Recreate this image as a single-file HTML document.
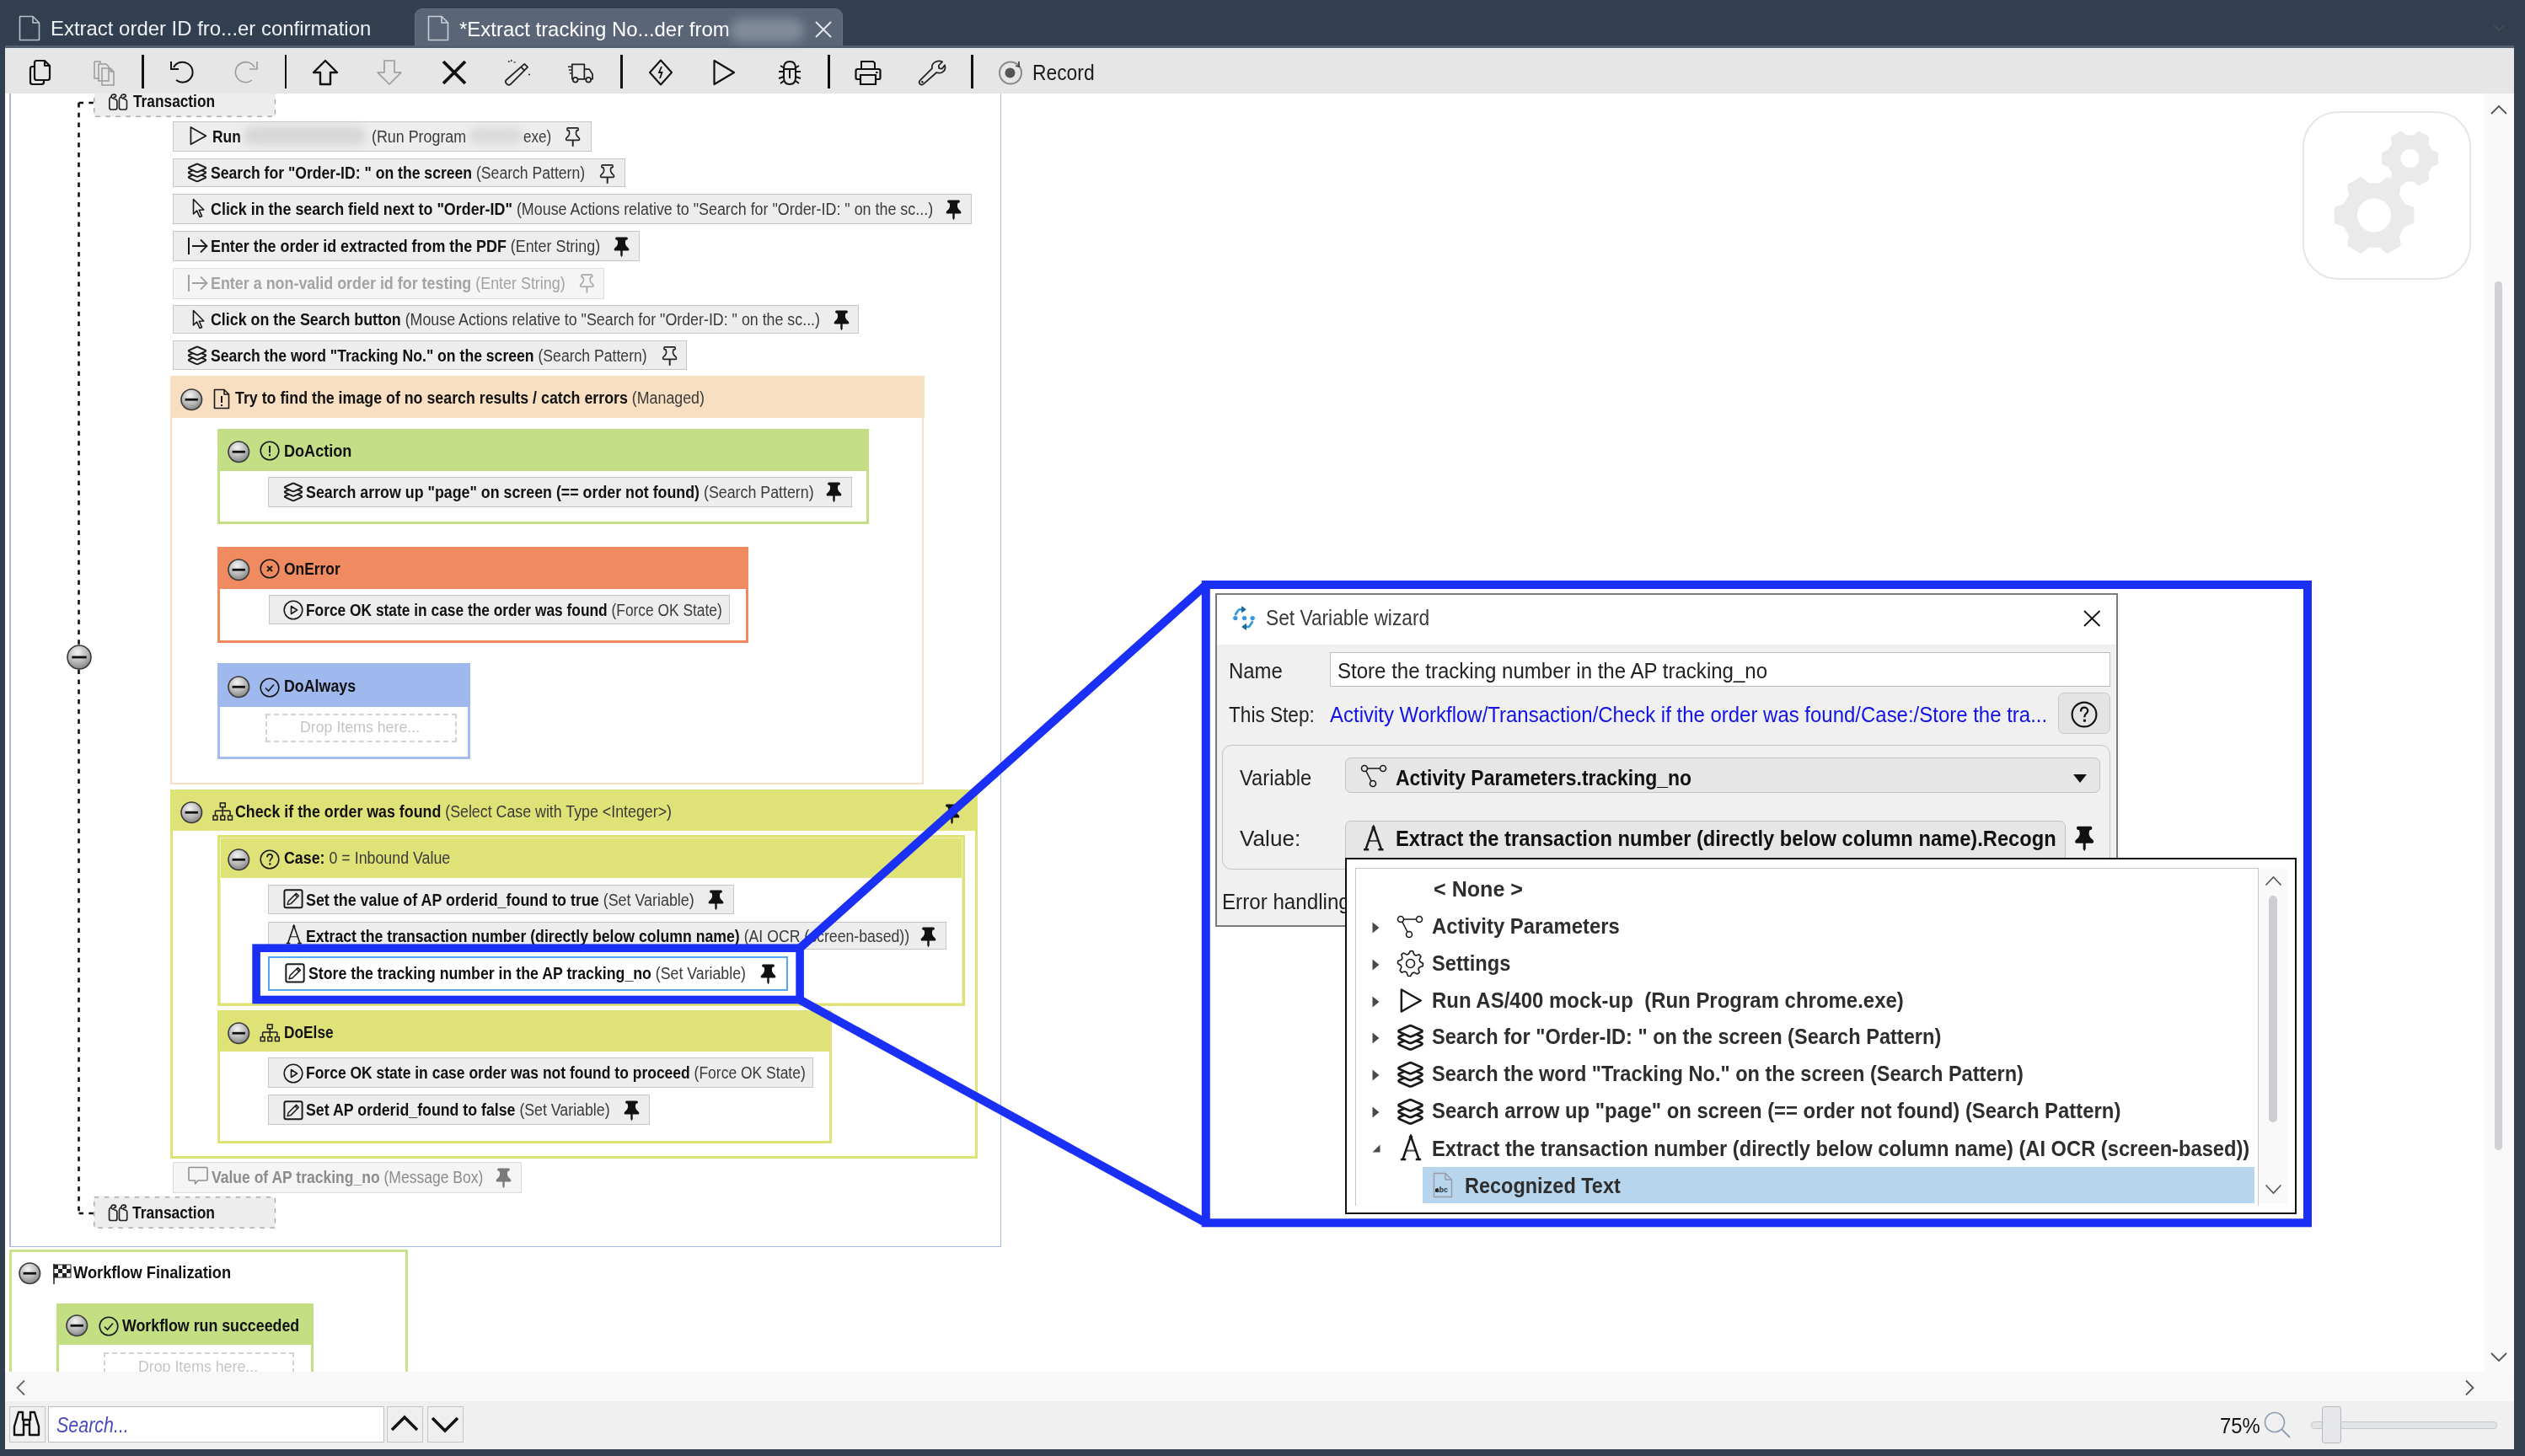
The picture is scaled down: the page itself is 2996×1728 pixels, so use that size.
<!DOCTYPE html><html><head><meta charset="utf-8"><style>
html,body{margin:0;padding:0;width:2996px;height:1728px;overflow:hidden;background:#323f50}
.a{position:absolute;box-sizing:content-box}
.ic{position:absolute;overflow:visible}
.tx{position:absolute;white-space:nowrap;font-family:"Liberation Sans",sans-serif;line-height:1;transform-origin:0 0}
.tx b{font-weight:700}
.tx .r{font-weight:400}
.tx .i{font-style:italic;font-weight:400}
</style></head><body><svg width="0" height="0" style="position:absolute"><defs>
<radialGradient id="gm" cx="0.42" cy="0.3" r="0.75"><stop offset="0" stop-color="#f4f4f4"/><stop offset="0.55" stop-color="#b9b9b9"/><stop offset="1" stop-color="#7d7d7d"/></radialGradient>
</defs></svg>
<div class="a" style="left:0px;top:0px;width:2996px;height:1728px;background:#323f50"></div>
<div class="a" style="left:492px;top:10px;width:506px;height:46px;background:#5a6678;border:1px solid #66727f;border-bottom:none;border-radius:9px 9px 0 0"></div>
<div class="a" style="left:6px;top:53.5px;width:2977px;height:4px;background:#516073"></div>
<div class="a" style="left:6px;top:57px;width:2977px;height:54px;background:#e6e6e6"></div>
<div class="a" style="left:6px;top:111px;width:2941px;height:1517px;background:#ffffff"></div>
<div class="a" style="left:2947px;top:111px;width:36px;height:1517px;background:#f9f9f9"></div>
<div class="a" style="left:6px;top:1628px;width:2977px;height:35px;background:#f8f8f8"></div>
<div class="a" style="left:6px;top:1663px;width:2977px;height:57px;background:#f0f0f0"></div>
<svg class="ic" style="left:22px;top:18px;width:26px;height:31px" viewBox="0 0 26 31" ><path d="M1.5 1.5 H17 L24.5 9 V29.5 H1.5 Z M17 1.5 V9 H24.5" fill="none" stroke="#b9c0ca" stroke-width="1.6" stroke-linejoin="round"/></svg>
<div id="t1" class="tx " style="left:60.02px;top:21.8px;font-size:24.5px;color:#eef1f4;transform:scaleX(0.9766);"><span class="r">Extract order ID fro...er confirmation</span></div>
<svg class="ic" style="left:507px;top:18px;width:26px;height:31px" viewBox="0 0 26 31" ><path d="M1.5 1.5 H17 L24.5 9 V29.5 H1.5 Z M17 1.5 V9 H24.5" fill="none" stroke="#c9cfd8" stroke-width="1.6" stroke-linejoin="round"/></svg>
<div id="t2" class="tx " style="left:545.02px;top:22.6px;font-size:24.5px;color:#ffffff;transform:scaleX(0.9773);"><span class="r">*Extract tracking No...der from</span></div>
<div class="a" style="left:866px;top:22px;width:88px;height:28px;background:#8a94a3;filter:blur(6px);opacity:.8;border-radius:14px"></div>
<svg class="ic" style="left:967px;top:25px;width:20px;height:20px" viewBox="0 0 20 20" ><path d="M1 1 L19 19 M19 1 L1 19" stroke="#e8ebef" stroke-width="1.8"/></svg>
<svg class="ic" style="left:2958px;top:29px;width:14px;height:8px" viewBox="0 0 14 8" ><path d="M1 1 L7 7 L13 1" fill="none" stroke="#4a4f55" stroke-width="1.3"/></svg>
<svg class="ic" style="left:32px;top:69.5px;width:32px;height:32px" viewBox="0 0 32 32" ><path d="M9 4.5 Q9 2 11.5 2 H21 L27 8 V22.5 Q27 25 24.5 25 H11.5 Q9 25 9 22.5 Z M21 2 V8 H27" fill="none" stroke="#111" stroke-width="2.2" stroke-linejoin="round"/><path d="M9 9 H6.5 Q4 9 4 11.5 V27.5 Q4 30 6.5 30 H17.5 Q20 30 20 27.5 V25" fill="none" stroke="#111" stroke-width="2.2"/></svg>
<svg class="ic" style="left:108px;top:69.5px;width:32px;height:32px" viewBox="0 0 32 32" ><path d="M4 3 H11 V5 M4 3 V23 H10" fill="none" stroke="#9a9a9a" stroke-width="1.5"/><path d="M9 6 H18 L21 9 V26 H9 Z" fill="none" stroke="#9a9a9a" stroke-width="1.5"/><path d="M13 11 H23 L27 15 V31 H13 Z M23 11 V15 H27" fill="none" stroke="#9a9a9a" stroke-width="1.5"/></svg>
<div class="a" style="left:168.3px;top:65px;width:2.4px;height:40px;background:#111"></div>
<svg class="ic" style="left:200px;top:69.5px;width:32px;height:32px" viewBox="0 0 32 32" ><path d="M6 10 A12 12 0 1 1 9 25" fill="none" stroke="#111" stroke-width="2"/><path d="M3 3 V12 H12" fill="none" stroke="#111" stroke-width="2"/></svg>
<svg class="ic" style="left:276px;top:69.5px;width:32px;height:32px" viewBox="0 0 32 32" ><path d="M26 10 A12 12 0 1 0 23 25" fill="none" stroke="#9a9a9a" stroke-width="1.6"/><path d="M29 3 V12 H20" fill="none" stroke="#9a9a9a" stroke-width="1.6"/></svg>
<div class="a" style="left:337.8px;top:65px;width:2.4px;height:40px;background:#111"></div>
<svg class="ic" style="left:370px;top:69.5px;width:32px;height:32px" viewBox="0 0 32 32" ><path d="M16 2 L30 16 H22 V30 H10 V16 H2 Z" fill="none" stroke="#111" stroke-width="2.4" stroke-linejoin="round"/></svg>
<svg class="ic" style="left:446px;top:69.5px;width:32px;height:32px" viewBox="0 0 32 32" ><path d="M16 30 L30 16 H22 V2 H10 V16 H2 Z" fill="none" stroke="#9a9a9a" stroke-width="1.6" stroke-linejoin="round"/></svg>
<svg class="ic" style="left:523px;top:69.5px;width:32px;height:32px" viewBox="0 0 32 32" ><path d="M3 3 L29 29 M29 3 L3 29" stroke="#111" stroke-width="3.8"/></svg>
<svg class="ic" style="left:598px;top:69.5px;width:32px;height:32px" viewBox="0 0 33 33" ><path d="M25 6 L29 10 L8 31 Q6 32.5 4 31 L2.5 29.5 Q1 27.5 3 25.5 Z M21 10 L25 14" fill="none" stroke="#222" stroke-width="1.8" stroke-linejoin="round"/><path d="M5 3 h2 M9 1 v2 M12 4 h2 M30 19 h2" stroke="#222" stroke-width="1.5"/></svg>
<svg class="ic" style="left:673px;top:69.5px;width:32px;height:32px" viewBox="0 0 33 32" ><path d="M6 6 H21 V24 H6 Z M21 12 H27 L31 18 V24 H21" fill="none" stroke="#222" stroke-width="1.8" stroke-linejoin="round"/><circle cx="10" cy="25" r="3" fill="#e6e6e6" stroke="#222" stroke-width="1.8"/><circle cx="26" cy="25" r="3" fill="#e6e6e6" stroke="#222" stroke-width="1.8"/><path d="M1 9 H5 M2 13 H5 M3 17 H5" stroke="#222" stroke-width="1.5"/></svg>
<div class="a" style="left:736.3px;top:65px;width:2.4px;height:40px;background:#111"></div>
<svg class="ic" style="left:770px;top:69.5px;width:28px;height:32px" viewBox="0 0 28 32" ><path d="M14 1.5 L27 16 L14 30.5 L1 16 Z" fill="none" stroke="#111" stroke-width="2" stroke-linejoin="round"/><path d="M15 9 L12 16 H15.5 L13 23" fill="none" stroke="#111" stroke-width="1.8"/></svg>
<svg class="ic" style="left:845px;top:69.5px;width:28px;height:32px" viewBox="0 0 28 32" ><path d="M2.5 2 L26 16 L2.5 30 Z" fill="none" stroke="#111" stroke-width="2.2" stroke-linejoin="round"/></svg>
<svg class="ic" style="left:921px;top:69.5px;width:32px;height:32px" viewBox="0 0 32 32" ><path d="M9 11 Q9 3 16 3 Q23 3 23 11 V22 Q23 30 16 30 Q9 30 9 22 Z" fill="none" stroke="#111" stroke-width="2"/><path d="M9 12 H23 M16 12 V23 M3 15 H9 M23 15 H29 M3 23 L9 21 M29 23 L23 21 M5 8 L10 11 M27 8 L22 11 M5 29 L9 26 M27 29 L23 26" stroke="#111" stroke-width="2"/></svg>
<div class="a" style="left:982.3px;top:65px;width:2.4px;height:40px;background:#111"></div>
<svg class="ic" style="left:1014px;top:69.5px;width:32px;height:32px" viewBox="0 0 32 32" ><path d="M8 12 V3 H22 L24 5 V12" fill="none" stroke="#111" stroke-width="2"/><path d="M7 24 H3 Q1.5 24 1.5 22 V14 Q1.5 12 3.5 12 H28.5 Q30.5 12 30.5 14 V22 Q30.5 24 29 24 H25" fill="none" stroke="#111" stroke-width="2.2"/><path d="M7 19 H25 V30 H7 Z" fill="none" stroke="#111" stroke-width="2.2"/><rect x="25" y="15" width="2.5" height="2" fill="#111"/></svg>
<svg class="ic" style="left:1090px;top:69.5px;width:32px;height:32px" viewBox="0 0 33 32" ><path d="M19 4 Q24 0.5 29 3 L24.5 7.5 L25 11 L28.5 11.5 L32 7 Q34 13 28.5 16 Q25 17.5 22 16 L6 30 Q3.5 32 1.5 30 Q-0.5 28 2 25.5 L16.5 11 Q15.5 7 19 4 Z" fill="none" stroke="#222" stroke-width="1.8" stroke-linejoin="round"/><circle cx="4.5" cy="27.5" r="1.3" fill="#222"/></svg>
<div class="a" style="left:1152.3px;top:65px;width:2.4px;height:40px;background:#111"></div>
<svg class="ic" style="left:1184px;top:69.5px;width:30px;height:32px" viewBox="0 0 30 32" ><circle cx="15" cy="16.5" r="13" fill="none" stroke="#8a8a8a" stroke-width="2"/><circle cx="14.5" cy="16.5" r="6" fill="#555"/><path d="M25 3 V9 L21 8" fill="none" stroke="#444" stroke-width="1.8"/></svg>
<div id="t3" class="tx " style="left:1224.58px;top:73.5px;font-size:25.5px;color:#1a1a1a;transform:scaleX(0.8954);"><span class="r">Record</span></div>
<div class="a" style="left:2732px;top:132px;width:196px;height:196px;border:2px solid #e6e6e6;border-radius:42px"></div>
<svg class="ic" style="left:2732px;top:132px;width:200px;height:200px" viewBox="0 0 200 200" ><polygon points="119.2,112.4 129.4,116.0 129.4,131.0 119.2,134.6 111.8,147.6 113.7,158.2 100.7,165.7 92.5,158.7 77.5,158.7 69.3,165.7 56.3,158.2 58.2,147.6 50.8,134.6 40.6,131.0 40.6,116.0 50.8,112.4 58.2,99.4 56.3,88.8 69.3,81.3 77.5,88.3 92.5,88.3 100.7,81.3 113.7,88.8 111.8,99.4" fill="#eaeaea" stroke="#eaeaea" stroke-width="6" stroke-linejoin="round"/><circle cx="85" cy="123.5" r="20" fill="#fff"/><polygon points="151.3,48.3 158.1,50.8 158.1,61.2 151.3,63.7 146.1,72.7 147.3,79.9 138.3,85.1 132.7,80.5 122.3,80.5 116.7,85.1 107.7,79.9 108.9,72.7 103.7,63.7 96.9,61.2 96.9,50.8 103.7,48.3 108.9,39.3 107.7,32.1 116.7,26.9 122.3,31.5 132.7,31.5 138.3,26.9 147.3,32.1 146.1,39.3" fill="#eaeaea" stroke="#eaeaea" stroke-width="6" stroke-linejoin="round"/><circle cx="127.5" cy="56" r="11" fill="#fff"/></svg>
<div style="position:absolute;left:0;top:0;width:2996px;height:1728px;clip-path:inset(111px 49px 100px 6px)">
<div class="a" style="left:11px;top:111px;width:1.6px;height:1369px;background:#a9b7e4"></div>
<div class="a" style="left:1186.5px;top:111px;width:1.6px;height:1369px;background:#a9b7e4"></div>
<div class="a" style="left:11px;top:1478.6px;width:1177px;height:1.6px;background:#a9b7e4"></div>
<svg class="ic" style="left:80px;top:115px;width:40px;height:1335px" viewBox="0 0 40 1335" ><path d="M13.5 7 V1325 M13.5 7 H31 M13.5 1325 H31" fill="none" stroke="#111" stroke-width="2.6" stroke-dasharray="5.5 6.3"/></svg>
<svg class="ic" style="left:78.5px;top:764.5px;width:30px;height:30px" viewBox="0 0 30 30" ><circle cx="15.0" cy="15.0" r="14.0" fill="url(#gm)" stroke="#3a3a3a" stroke-width="1.6"/><rect x="6.3" y="13.6" width="17.4" height="2.8" fill="#111"/></svg>
<svg class="ic" style="left:110.9px;top:104px;width:216.2px;height:35px" viewBox="0 0 216.2 35"><rect x="0.7" y="0.7" width="214.79999999999998" height="33.6" fill="#ededed" stroke="#aaaaaa" stroke-width="1.4" stroke-dasharray="5.5 6.5"/></svg>
<svg class="ic" style="left:128.3px;top:111px;width:24px;height:20px" viewBox="0 0 24 21" ><path d="M1.3 7.5 V17.6 Q1.3 20 3.7 20 H8.4 Q10.8 20 10.8 17.6 V9.6 Q10.8 8.2 9.6 7.7 L4.8 5.6 Q3.4 4.8 3.8 3 Q4.5 0.9 7.2 1.2 Q9.6 1.5 9.5 3.3 Q9.3 4.8 7 4.5 M1.3 7.5 Q1.3 5.3 3.3 4" fill="none" stroke="#222" stroke-width="1.7" stroke-linejoin="round" stroke-linecap="round"/><path d="M1.3 7.5 V17.6 Q1.3 20 3.7 20 H8.4 Q10.8 20 10.8 17.6 V9.6 Q10.8 8.2 9.6 7.7 L4.8 5.6 Q3.4 4.8 3.8 3 Q4.5 0.9 7.2 1.2 Q9.6 1.5 9.5 3.3 Q9.3 4.8 7 4.5 M1.3 7.5 Q1.3 5.3 3.3 4" transform="translate(12.2,0)" fill="none" stroke="#222" stroke-width="1.7" stroke-linejoin="round" stroke-linecap="round"/></svg>
<div id="t4" class="tx " style="left:157.82px;top:111.2px;font-size:19.5px;color:#111;transform:scaleX(0.8866);"><b>Transaction</b></div>
<svg class="ic" style="left:110.9px;top:1419.6px;width:216.2px;height:38.0px" viewBox="0 0 216.2 38.0"><rect x="0.7" y="0.7" width="214.79999999999998" height="36.6" fill="#ededed" stroke="#aaaaaa" stroke-width="1.4" stroke-dasharray="5.5 6.5"/></svg>
<svg class="ic" style="left:128.3px;top:1429.4px;width:24px;height:20.5px" viewBox="0 0 24 21" ><path d="M1.3 7.5 V17.6 Q1.3 20 3.7 20 H8.4 Q10.8 20 10.8 17.6 V9.6 Q10.8 8.2 9.6 7.7 L4.8 5.6 Q3.4 4.8 3.8 3 Q4.5 0.9 7.2 1.2 Q9.6 1.5 9.5 3.3 Q9.3 4.8 7 4.5 M1.3 7.5 Q1.3 5.3 3.3 4" fill="none" stroke="#222" stroke-width="1.7" stroke-linejoin="round" stroke-linecap="round"/><path d="M1.3 7.5 V17.6 Q1.3 20 3.7 20 H8.4 Q10.8 20 10.8 17.6 V9.6 Q10.8 8.2 9.6 7.7 L4.8 5.6 Q3.4 4.8 3.8 3 Q4.5 0.9 7.2 1.2 Q9.6 1.5 9.5 3.3 Q9.3 4.8 7 4.5 M1.3 7.5 Q1.3 5.3 3.3 4" transform="translate(12.2,0)" fill="none" stroke="#222" stroke-width="1.7" stroke-linejoin="round" stroke-linecap="round"/></svg>
<div id="t5" class="tx " style="left:156.82px;top:1430.0px;font-size:19.5px;color:#111;transform:scaleX(0.8958);"><b>Transaction</b></div>
<div class="a" style="left:204.5px;top:143.8px;width:495.0px;height:34.5px;background:#ededed;border:1.5px solid #c6c6c6"></div>
<svg class="ic" style="left:224.3px;top:149.2px;width:22.3px;height:24.3px" viewBox="0 0 22 25" ><path d="M2 2 L20.5 12.5 L2 23 Z" fill="none" stroke="#1a1a1a" stroke-width="1.8" stroke-linejoin="round"/></svg>
<div id="t6" class="tx " style="left:251.52px;top:153.2px;font-size:19.5px;color:#111;transform:scaleX(0.8929);"><b>Run</b></div>
<div class="a" style="left:289px;top:150px;width:145px;height:22px;background:#d2d2d2;filter:blur(5px);border-radius:10px;opacity:.8"></div>
<div id="t7" class="tx " style="left:441.22px;top:153.2px;font-size:19.5px;color:#111;transform:scaleX(0.9157);"><span class="r" style="color:#3a3a3a">(Run Program</span></div>
<div class="a" style="left:557px;top:151px;width:63px;height:20px;background:#d6d6d6;filter:blur(5px);border-radius:9px;opacity:.8"></div>
<div id="t8" class="tx " style="left:621.22px;top:153.2px;font-size:19.5px;color:#111;transform:scaleX(0.8737);"><span class="r" style="color:#3a3a3a">exe)</span></div>
<svg class="ic" style="left:668.5px;top:148.5px;width:19.5px;height:25px" viewBox="0 0 19.5 25" ><g transform="translate(2,1.6) scale(0.9)"><path d="M3.2 1.4 H15.6 Q16.9 1.4 16.9 3.1 Q16.9 4.8 15.6 4.8 H14.6 Q13.6 7 14 9.5 Q14.4 11.8 17.4 14.2 Q18.4 15.1 18.4 16.2 Q18.4 17.5 17 17.5 H2 Q0.6 17.5 0.6 16.2 Q0.6 15.1 1.6 14.2 Q4.6 11.8 5 9.5 Q5.4 7 4.4 4.8 H3.3 Q2.1 4.8 2.1 3.1 Q2.1 1.4 3.2 1.4 Z" fill="none" stroke="#222" stroke-width="1.8" stroke-linejoin="round"/><path d="M8.5 17.5 H10.5 V26" fill="#222" stroke="#222" stroke-width="0"/><rect x="8.6" y="17.5" width="1.9" height="8.3" fill="#222"/></g></svg>
<div class="a" style="left:204.5px;top:187.7px;width:535.0px;height:32.20000000000002px;background:#ededed;border:1.5px solid #c6c6c6"></div>
<svg class="ic" style="left:222px;top:193.4px;width:24px;height:24px" viewBox="0 0 24 24" ><path d="M12 12.6 Q12.6 12.6 13.4 13 L21.6 16.6 Q22.8 17.3 21.6 18.1 L13.4 21.8 Q12 22.5 10.6 21.8 L2.4 18.1 Q1.2 17.3 2.4 16.6 L10.6 13 Q11.4 12.6 12 12.6 Z" fill="#ededed" stroke="#1a1a1a" stroke-width="2" stroke-linejoin="round"/><path d="M12 7.1 Q12.6 7.1 13.4 7.5 L21.6 11.1 Q22.8 11.8 21.6 12.6 L13.4 16.3 Q12 17.0 10.6 16.3 L2.4 12.6 Q1.2 11.8 2.4 11.1 L10.6 7.5 Q11.4 7.1 12 7.1 Z" fill="#ededed" stroke="#1a1a1a" stroke-width="2" stroke-linejoin="round"/><path d="M12 1.6 Q12.6 1.6 13.4 2 L21.6 5.6 Q22.8 6.3 21.6 7.1 L13.4 10.8 Q12 11.5 10.6 10.8 L2.4 7.1 Q1.2 6.3 2.4 5.6 L10.6 2 Q11.4 1.6 12 1.6 Z" fill="#ededed" stroke="#1a1a1a" stroke-width="2" stroke-linejoin="round"/></svg>
<div id="t9" class="tx " style="left:250.22px;top:195.9px;font-size:19.5px;color:#111;transform:scaleX(0.9026);"><b>Search for "Order-ID: " on the screen </b><span class="r" style="color:#3a3a3a">(Search Pattern)</span></div>
<svg class="ic" style="left:710px;top:192.5px;width:19.5px;height:25px" viewBox="0 0 19.5 25" ><g transform="translate(2,1.6) scale(0.9)"><path d="M3.2 1.4 H15.6 Q16.9 1.4 16.9 3.1 Q16.9 4.8 15.6 4.8 H14.6 Q13.6 7 14 9.5 Q14.4 11.8 17.4 14.2 Q18.4 15.1 18.4 16.2 Q18.4 17.5 17 17.5 H2 Q0.6 17.5 0.6 16.2 Q0.6 15.1 1.6 14.2 Q4.6 11.8 5 9.5 Q5.4 7 4.4 4.8 H3.3 Q2.1 4.8 2.1 3.1 Q2.1 1.4 3.2 1.4 Z" fill="none" stroke="#222" stroke-width="1.8" stroke-linejoin="round"/><path d="M8.5 17.5 H10.5 V26" fill="#222" stroke="#222" stroke-width="0"/><rect x="8.6" y="17.5" width="1.9" height="8.3" fill="#222"/></g></svg>
<div class="a" style="left:204.5px;top:229.7px;width:946.7px;height:34.400000000000034px;background:#ededed;border:1.5px solid #c6c6c6"></div>
<svg class="ic" style="left:228px;top:235.3px;width:15px;height:24px" viewBox="0 0 15 24" ><path d="M1.5 1.5 L1.5 19 L5.5 15 L9 22.5 L11.5 21.5 L8.3 14.3 L13.8 14 Z" fill="none" stroke="#1a1a1a" stroke-width="1.6" stroke-linejoin="round"/></svg>
<div id="t10" class="tx " style="left:250.22px;top:239.0px;font-size:19.5px;color:#111;transform:scaleX(0.9173);"><b>Click in the search field next to "Order-ID" </b><span class="r" style="color:#3a3a3a">(Mouse Actions relative to "Search for "Order-ID: " on the sc...)</span></div>
<svg class="ic" style="left:1121.6px;top:236px;width:19.5px;height:25px" viewBox="0 0 19.5 25" ><path d="M3.2 1.4 H15.6 Q16.9 1.4 16.9 3.1 Q16.9 4.8 15.6 4.8 H14.6 Q13.6 7 14 9.5 Q14.4 11.8 17.4 14.2 Q18.4 15.1 18.4 16.2 Q18.4 17.5 17 17.5 H2 Q0.6 17.5 0.6 16.2 Q0.6 15.1 1.6 14.2 Q4.6 11.8 5 9.5 Q5.4 7 4.4 4.8 H3.3 Q2.1 4.8 2.1 3.1 Q2.1 1.4 3.2 1.4 Z" fill="#111"/><path d="M8.3 17 H10.7 V23 L9.5 25.3 L8.3 23 Z" fill="#111"/></svg>
<div class="a" style="left:204.5px;top:273.9px;width:552.7px;height:33.700000000000045px;background:#ededed;border:1.5px solid #c6c6c6"></div>
<svg class="ic" style="left:222px;top:280px;width:26px;height:24px" viewBox="0 0 26 24" ><rect x="1" y="2" width="2" height="20" fill="#1a1a1a"/><path d="M6 12 H23 M16 4.5 L23.5 12 L16 19.5" fill="none" stroke="#1a1a1a" stroke-width="1.8"/></svg>
<div id="t11" class="tx " style="left:250.22px;top:282.9px;font-size:19.5px;color:#111;transform:scaleX(0.9172);"><b>Enter the order id extracted from the PDF </b><span class="r" style="color:#3a3a3a">(Enter String)</span></div>
<svg class="ic" style="left:728px;top:280px;width:19.5px;height:25px" viewBox="0 0 19.5 25" ><path d="M3.2 1.4 H15.6 Q16.9 1.4 16.9 3.1 Q16.9 4.8 15.6 4.8 H14.6 Q13.6 7 14 9.5 Q14.4 11.8 17.4 14.2 Q18.4 15.1 18.4 16.2 Q18.4 17.5 17 17.5 H2 Q0.6 17.5 0.6 16.2 Q0.6 15.1 1.6 14.2 Q4.6 11.8 5 9.5 Q5.4 7 4.4 4.8 H3.3 Q2.1 4.8 2.1 3.1 Q2.1 1.4 3.2 1.4 Z" fill="#111"/><path d="M8.3 17 H10.7 V23 L9.5 25.3 L8.3 23 Z" fill="#111"/></svg>
<div class="a" style="left:204.5px;top:317.8px;width:510.5px;height:35.19999999999999px;background:#f5f5f5;border:1px solid #dedede"></div>
<svg class="ic" style="left:222px;top:324px;width:26px;height:24px" viewBox="0 0 26 24" ><rect x="1" y="2" width="2" height="20" fill="#a0a0a0"/><path d="M6 12 H23 M16 4.5 L23.5 12 L16 19.5" fill="none" stroke="#a0a0a0" stroke-width="1.8"/></svg>
<div id="t12" class="tx " style="left:250.22px;top:327.0px;font-size:19.5px;color:#a3a3a3;transform:scaleX(0.9178);"><b>Enter a non-valid order id for testing </b><span class="r">(Enter String)</span></div>
<svg class="ic" style="left:686px;top:323px;width:19px;height:25px" viewBox="0 0 19.5 25" ><g transform="translate(2,1.6) scale(0.9)"><path d="M3.2 1.4 H15.6 Q16.9 1.4 16.9 3.1 Q16.9 4.8 15.6 4.8 H14.6 Q13.6 7 14 9.5 Q14.4 11.8 17.4 14.2 Q18.4 15.1 18.4 16.2 Q18.4 17.5 17 17.5 H2 Q0.6 17.5 0.6 16.2 Q0.6 15.1 1.6 14.2 Q4.6 11.8 5 9.5 Q5.4 7 4.4 4.8 H3.3 Q2.1 4.8 2.1 3.1 Q2.1 1.4 3.2 1.4 Z" fill="none" stroke="#a8a8a8" stroke-width="1.8" stroke-linejoin="round"/><path d="M8.5 17.5 H10.5 V26" fill="#a8a8a8" stroke="#a8a8a8" stroke-width="0"/><rect x="8.6" y="17.5" width="1.9" height="8.3" fill="#a8a8a8"/></g></svg>
<div class="a" style="left:204.5px;top:361.7px;width:812.4px;height:32.0px;background:#ededed;border:1.5px solid #c6c6c6"></div>
<svg class="ic" style="left:228px;top:367px;width:15px;height:24px" viewBox="0 0 15 24" ><path d="M1.5 1.5 L1.5 19 L5.5 15 L9 22.5 L11.5 21.5 L8.3 14.3 L13.8 14 Z" fill="none" stroke="#1a1a1a" stroke-width="1.6" stroke-linejoin="round"/></svg>
<div id="t13" class="tx " style="left:250.22px;top:369.8px;font-size:19.5px;color:#111;transform:scaleX(0.9137);"><b>Click on the Search button </b><span class="r" style="color:#3a3a3a">(Mouse Actions relative to "Search for "Order-ID: " on the sc...)</span></div>
<svg class="ic" style="left:989px;top:366.5px;width:19.5px;height:25px" viewBox="0 0 19.5 25" ><path d="M3.2 1.4 H15.6 Q16.9 1.4 16.9 3.1 Q16.9 4.8 15.6 4.8 H14.6 Q13.6 7 14 9.5 Q14.4 11.8 17.4 14.2 Q18.4 15.1 18.4 16.2 Q18.4 17.5 17 17.5 H2 Q0.6 17.5 0.6 16.2 Q0.6 15.1 1.6 14.2 Q4.6 11.8 5 9.5 Q5.4 7 4.4 4.8 H3.3 Q2.1 4.8 2.1 3.1 Q2.1 1.4 3.2 1.4 Z" fill="#111"/><path d="M8.3 17 H10.7 V23 L9.5 25.3 L8.3 23 Z" fill="#111"/></svg>
<div class="a" style="left:204.5px;top:403.7px;width:608.5px;height:33.60000000000002px;background:#ededed;border:1.5px solid #c6c6c6"></div>
<svg class="ic" style="left:222px;top:409.5px;width:24px;height:24px" viewBox="0 0 24 24" ><path d="M12 12.6 Q12.6 12.6 13.4 13 L21.6 16.6 Q22.8 17.3 21.6 18.1 L13.4 21.8 Q12 22.5 10.6 21.8 L2.4 18.1 Q1.2 17.3 2.4 16.6 L10.6 13 Q11.4 12.6 12 12.6 Z" fill="#ededed" stroke="#1a1a1a" stroke-width="2" stroke-linejoin="round"/><path d="M12 7.1 Q12.6 7.1 13.4 7.5 L21.6 11.1 Q22.8 11.8 21.6 12.6 L13.4 16.3 Q12 17.0 10.6 16.3 L2.4 12.6 Q1.2 11.8 2.4 11.1 L10.6 7.5 Q11.4 7.1 12 7.1 Z" fill="#ededed" stroke="#1a1a1a" stroke-width="2" stroke-linejoin="round"/><path d="M12 1.6 Q12.6 1.6 13.4 2 L21.6 5.6 Q22.8 6.3 21.6 7.1 L13.4 10.8 Q12 11.5 10.6 10.8 L2.4 7.1 Q1.2 6.3 2.4 5.6 L10.6 2 Q11.4 1.6 12 1.6 Z" fill="#ededed" stroke="#1a1a1a" stroke-width="2" stroke-linejoin="round"/></svg>
<div id="t14" class="tx " style="left:250.22px;top:412.6px;font-size:19.5px;color:#111;transform:scaleX(0.9029);"><b>Search the word "Tracking No." on the screen </b><span class="r" style="color:#3a3a3a">(Search Pattern)</span></div>
<svg class="ic" style="left:784px;top:409px;width:19.5px;height:25px" viewBox="0 0 19.5 25" ><g transform="translate(2,1.6) scale(0.9)"><path d="M3.2 1.4 H15.6 Q16.9 1.4 16.9 3.1 Q16.9 4.8 15.6 4.8 H14.6 Q13.6 7 14 9.5 Q14.4 11.8 17.4 14.2 Q18.4 15.1 18.4 16.2 Q18.4 17.5 17 17.5 H2 Q0.6 17.5 0.6 16.2 Q0.6 15.1 1.6 14.2 Q4.6 11.8 5 9.5 Q5.4 7 4.4 4.8 H3.3 Q2.1 4.8 2.1 3.1 Q2.1 1.4 3.2 1.4 Z" fill="none" stroke="#222" stroke-width="1.8" stroke-linejoin="round"/><path d="M8.5 17.5 H10.5 V26" fill="#222" stroke="#222" stroke-width="0"/><rect x="8.6" y="17.5" width="1.9" height="8.3" fill="#222"/></g></svg>
<div class="a" style="left:202.3px;top:445.8px;width:890.0px;height:481.7px;border:2.5px solid #fcdcc1;background:#fff"></div>
<div class="a" style="left:202.3px;top:445.8px;width:895.0px;height:50.5px;background:#f9dfc2"></div>
<svg class="ic" style="left:214.05px;top:460.95px;width:26.5px;height:26.5px" viewBox="0 0 26.5 26.5" ><circle cx="13.25" cy="13.25" r="12.25" fill="url(#gm)" stroke="#3a3a3a" stroke-width="1.6"/><rect x="5.5649999999999995" y="11.85" width="15.37" height="2.8" fill="#111"/></svg>
<svg class="ic" style="left:253px;top:460.7px;width:20px;height:25px" viewBox="0 0 20 25" ><path d="M1.5 1.5 H13 L18.5 7 V23.5 H1.5 Z M13 1.5 V7 H18.5" fill="none" stroke="#1a1a1a" stroke-width="1.6" stroke-linejoin="round"/><rect x="9" y="9" width="2" height="8" fill="#1a1a1a"/><rect x="9" y="19" width="2" height="2" fill="#1a1a1a"/></svg>
<div id="t15" class="tx " style="left:279.22px;top:463.3px;font-size:19.5px;color:#111;transform:scaleX(0.9128);"><b>Try to find the image of no search results / catch errors </b><span class="r" style="color:#3a3a3a">(Managed)</span></div>
<div class="a" style="left:258.3px;top:509.2px;width:767.1000000000001px;height:107.30000000000001px;border:3px solid #c3de85;background:#fff"></div>
<div class="a" style="left:258.3px;top:509.2px;width:773.1000000000001px;height:49.80000000000001px;background:#c3de85"></div>
<svg class="ic" style="left:269.95px;top:522.75px;width:26.5px;height:26.5px" viewBox="0 0 26.5 26.5" ><circle cx="13.25" cy="13.25" r="12.25" fill="url(#gm)" stroke="#3a3a3a" stroke-width="1.6"/><rect x="5.5649999999999995" y="11.85" width="15.37" height="2.8" fill="#111"/></svg>
<svg class="ic" style="left:308px;top:523px;width:24px;height:24px" viewBox="0 0 24 24" ><circle cx="12" cy="12" r="10.8" fill="none" stroke="#1a1a1a" stroke-width="1.6"/><rect x="11" y="6" width="2" height="8.5" fill="#1a1a1a"/><rect x="11" y="16" width="2" height="2.2" fill="#1a1a1a"/></svg>
<div id="t16" class="tx " style="left:336.72px;top:526.3px;font-size:19.5px;color:#111;transform:scaleX(0.9272);"><b>DoAction</b></div>
<div class="a" style="left:318.3px;top:565.5px;width:691.2px;height:34.10000000000002px;background:#ededed;border:1.5px solid #c6c6c6"></div>
<svg class="ic" style="left:336px;top:571.5px;width:24px;height:24px" viewBox="0 0 24 24" ><path d="M12 12.6 Q12.6 12.6 13.4 13 L21.6 16.6 Q22.8 17.3 21.6 18.1 L13.4 21.8 Q12 22.5 10.6 21.8 L2.4 18.1 Q1.2 17.3 2.4 16.6 L10.6 13 Q11.4 12.6 12 12.6 Z" fill="#ededed" stroke="#1a1a1a" stroke-width="2" stroke-linejoin="round"/><path d="M12 7.1 Q12.6 7.1 13.4 7.5 L21.6 11.1 Q22.8 11.8 21.6 12.6 L13.4 16.3 Q12 17.0 10.6 16.3 L2.4 12.6 Q1.2 11.8 2.4 11.1 L10.6 7.5 Q11.4 7.1 12 7.1 Z" fill="#ededed" stroke="#1a1a1a" stroke-width="2" stroke-linejoin="round"/><path d="M12 1.6 Q12.6 1.6 13.4 2 L21.6 5.6 Q22.8 6.3 21.6 7.1 L13.4 10.8 Q12 11.5 10.6 10.8 L2.4 7.1 Q1.2 6.3 2.4 5.6 L10.6 2 Q11.4 1.6 12 1.6 Z" fill="#ededed" stroke="#1a1a1a" stroke-width="2" stroke-linejoin="round"/></svg>
<div id="t17" class="tx " style="left:363.22px;top:574.7px;font-size:19.5px;color:#111;transform:scaleX(0.9131);"><b>Search arrow up "page" on screen (== order not found) </b><span class="r" style="color:#3a3a3a">(Search Pattern)</span></div>
<svg class="ic" style="left:980px;top:571px;width:19.5px;height:25px" viewBox="0 0 19.5 25" ><path d="M3.2 1.4 H15.6 Q16.9 1.4 16.9 3.1 Q16.9 4.8 15.6 4.8 H14.6 Q13.6 7 14 9.5 Q14.4 11.8 17.4 14.2 Q18.4 15.1 18.4 16.2 Q18.4 17.5 17 17.5 H2 Q0.6 17.5 0.6 16.2 Q0.6 15.1 1.6 14.2 Q4.6 11.8 5 9.5 Q5.4 7 4.4 4.8 H3.3 Q2.1 4.8 2.1 3.1 Q2.1 1.4 3.2 1.4 Z" fill="#111"/><path d="M8.3 17 H10.7 V23 L9.5 25.3 L8.3 23 Z" fill="#111"/></svg>
<div class="a" style="left:258.4px;top:649.3px;width:623.5px;height:107.30000000000007px;border:3px solid #f08a5c;background:#fff"></div>
<div class="a" style="left:258.4px;top:649.3px;width:629.5px;height:49.40000000000009px;background:#f08b61"></div>
<svg class="ic" style="left:269.95px;top:662.75px;width:26.5px;height:26.5px" viewBox="0 0 26.5 26.5" ><circle cx="13.25" cy="13.25" r="12.25" fill="url(#gm)" stroke="#3a3a3a" stroke-width="1.6"/><rect x="5.5649999999999995" y="11.85" width="15.37" height="2.8" fill="#111"/></svg>
<svg class="ic" style="left:308px;top:663px;width:24px;height:24px" viewBox="0 0 24 24" ><circle cx="12" cy="12" r="10.8" fill="none" stroke="#1a1a1a" stroke-width="1.6"/><path d="M9 9 L15 15 M15 9 L9 15" stroke="#1a1a1a" stroke-width="1.8"/></svg>
<div id="t18" class="tx " style="left:336.72px;top:666.2px;font-size:19.5px;color:#111;transform:scaleX(0.8914);"><b>OnError</b></div>
<div class="a" style="left:318.5px;top:705.5px;width:545.0px;height:33.89999999999998px;background:#ededed;border:1.5px solid #c6c6c6"></div>
<svg class="ic" style="left:336px;top:711.5px;width:24px;height:24px" viewBox="0 0 24 24" ><circle cx="12" cy="12" r="10.8" fill="none" stroke="#1a1a1a" stroke-width="1.6"/><path d="M9.5 7.5 L16.5 12 L9.5 16.5 Z" fill="none" stroke="#1a1a1a" stroke-width="1.6" stroke-linejoin="round"/></svg>
<div id="t19" class="tx " style="left:363.22px;top:714.6px;font-size:19.5px;color:#111;transform:scaleX(0.8898);"><b>Force OK state in case the order was found </b><span class="r" style="color:#3a3a3a">(Force OK State)</span></div>
<div class="a" style="left:258.4px;top:787.3px;width:293.80000000000007px;height:107.30000000000007px;border:3px solid #a3bcef;background:#fff"></div>
<div class="a" style="left:258.4px;top:787.3px;width:299.80000000000007px;height:51.5px;background:#9fb8ee"></div>
<svg class="ic" style="left:269.95px;top:802.35px;width:26.5px;height:26.5px" viewBox="0 0 26.5 26.5" ><circle cx="13.25" cy="13.25" r="12.25" fill="url(#gm)" stroke="#3a3a3a" stroke-width="1.6"/><rect x="5.5649999999999995" y="11.85" width="15.37" height="2.8" fill="#111"/></svg>
<svg class="ic" style="left:308px;top:803.5px;width:24px;height:24px" viewBox="0 0 24 24" ><circle cx="12" cy="12" r="10.8" fill="none" stroke="#1a1a1a" stroke-width="1.6"/><path d="M7 12.5 L10.5 16 L17 8.5" fill="none" stroke="#1a1a1a" stroke-width="1.6"/></svg>
<div id="t20" class="tx " style="left:336.72px;top:805.3px;font-size:19.5px;color:#111;transform:scaleX(0.9135);"><b>DoAlways</b></div>
<div class="a" style="left:314.8px;top:847px;width:223px;height:30px;border:2px dashed #d2d2d2"></div>
<div id="t21" class="tx " style="left:356.24px;top:853.4px;font-size:19px;color:#c4c4c4;transform:scaleX(0.9344);"><span class="r">Drop Items here...</span></div>
<div class="a" style="left:202.3px;top:937.4px;width:951.9000000000001px;height:431.30000000000007px;border:3px solid #dfe276;background:#fff"></div>
<div class="a" style="left:202.3px;top:937.4px;width:957.9000000000001px;height:48.89999999999998px;background:#dfe276"></div>
<svg class="ic" style="left:214.05px;top:950.75px;width:26.5px;height:26.5px" viewBox="0 0 26.5 26.5" ><circle cx="13.25" cy="13.25" r="12.25" fill="url(#gm)" stroke="#3a3a3a" stroke-width="1.6"/><rect x="5.5649999999999995" y="11.85" width="15.37" height="2.8" fill="#111"/></svg>
<svg class="ic" style="left:251.8px;top:952px;width:24.5px;height:22.5px" viewBox="0 0 25 23" ><rect x="9.5" y="1" width="6" height="5" fill="none" stroke="#1a1a1a" stroke-width="1.5"/><path d="M12.5 6 V10.5 M3.5 10.5 H21.5 M3.5 10.5 V16 M12.5 10.5 V16 M21.5 10.5 V16" fill="none" stroke="#1a1a1a" stroke-width="1.5"/><rect x="1" y="16.5" width="5" height="5" fill="none" stroke="#1a1a1a" stroke-width="1.5"/><rect x="10" y="16.5" width="5" height="5" fill="none" stroke="#1a1a1a" stroke-width="1.5"/><rect x="19" y="16.5" width="5" height="5" fill="none" stroke="#1a1a1a" stroke-width="1.5"/></svg>
<div id="t22" class="tx " style="left:279.22px;top:954.1px;font-size:19.5px;color:#111;transform:scaleX(0.9127);"><b>Check if the order was found </b><span class="r" style="color:#3a3a3a">(Select Case with Type &lt;Integer&gt;)</span></div>
<svg class="ic" style="left:1119.6px;top:953px;width:19.5px;height:25px" viewBox="0 0 19.5 25" ><path d="M3.2 1.4 H15.6 Q16.9 1.4 16.9 3.1 Q16.9 4.8 15.6 4.8 H14.6 Q13.6 7 14 9.5 Q14.4 11.8 17.4 14.2 Q18.4 15.1 18.4 16.2 Q18.4 17.5 17 17.5 H2 Q0.6 17.5 0.6 16.2 Q0.6 15.1 1.6 14.2 Q4.6 11.8 5 9.5 Q5.4 7 4.4 4.8 H3.3 Q2.1 4.8 2.1 3.1 Q2.1 1.4 3.2 1.4 Z" fill="#111"/><path d="M8.3 17 H10.7 V23 L9.5 25.3 L8.3 23 Z" fill="#111"/></svg>
<div class="a" style="left:258.3px;top:990.9px;width:881.1000000000001px;height:197.5000000000001px;border:3px solid #dfe276;background:#fff"></div>
<div class="a" style="left:258.3px;top:990.9px;width:887.1000000000001px;height:51.500000000000114px;background:#dfe276"></div>
<div class="a" style="left:261.3px;top:993.9px;width:879.1000000000001px;height:195.5000000000001px;border:1px solid #eef0b8"></div>
<svg class="ic" style="left:269.95px;top:1006.75px;width:26.5px;height:26.5px" viewBox="0 0 26.5 26.5" ><circle cx="13.25" cy="13.25" r="12.25" fill="url(#gm)" stroke="#3a3a3a" stroke-width="1.6"/><rect x="5.5649999999999995" y="11.85" width="15.37" height="2.8" fill="#111"/></svg>
<svg class="ic" style="left:308px;top:1008px;width:24px;height:24px" viewBox="0 0 24 24" ><circle cx="12" cy="12" r="10.8" fill="none" stroke="#1a1a1a" stroke-width="1.6"/><path d="M9 9.3 C9 6.8 10.5 5.8 12.1 5.8 C13.8 5.8 15.2 7 15.2 8.7 C15.2 11 12.3 11.2 12.3 13.8 V14.5" fill="none" stroke="#1a1a1a" stroke-width="1.7"/><rect x="11.2" y="16.3" width="2.2" height="2.2" fill="#1a1a1a"/></svg>
<div id="t23" class="tx " style="left:336.72px;top:1008.9px;font-size:19.5px;color:#111;transform:scaleX(0.9134);"><b>Case:</b><span class="r" style="color:#3a3a3a"> 0 = Inbound Value</span></div>
<div class="a" style="left:318.3px;top:1049.7px;width:550.9000000000001px;height:33.299999999999955px;background:#ededed;border:1.5px solid #c6c6c6"></div>
<svg class="ic" style="left:336px;top:1055px;width:24px;height:23.5px" viewBox="0 0 24 24" ><rect x="1.2" y="1.2" width="21.6" height="21.6" rx="2" fill="none" stroke="#1a1a1a" stroke-width="2"/><path d="M5 19 L6 15 L15.5 5.5 L18.5 8.5 L9 18 Z M14 7 L17 10" fill="none" stroke="#1a1a1a" stroke-width="1.5" stroke-linejoin="round"/></svg>
<div id="t24" class="tx " style="left:363.22px;top:1058.5px;font-size:19.5px;color:#111;transform:scaleX(0.9171);"><b>Set the value of AP orderid_found to true </b><span class="r" style="color:#3a3a3a">(Set Variable)</span></div>
<svg class="ic" style="left:840px;top:1055px;width:19.5px;height:25px" viewBox="0 0 19.5 25" ><path d="M3.2 1.4 H15.6 Q16.9 1.4 16.9 3.1 Q16.9 4.8 15.6 4.8 H14.6 Q13.6 7 14 9.5 Q14.4 11.8 17.4 14.2 Q18.4 15.1 18.4 16.2 Q18.4 17.5 17 17.5 H2 Q0.6 17.5 0.6 16.2 Q0.6 15.1 1.6 14.2 Q4.6 11.8 5 9.5 Q5.4 7 4.4 4.8 H3.3 Q2.1 4.8 2.1 3.1 Q2.1 1.4 3.2 1.4 Z" fill="#111"/><path d="M8.3 17 H10.7 V23 L9.5 25.3 L8.3 23 Z" fill="#111"/></svg>
<div class="a" style="left:318.3px;top:1093.9px;width:802.8px;height:31.59999999999991px;background:#ededed;border:1.5px solid #c6c6c6"></div>
<svg class="ic" style="left:339px;top:1097px;width:19.5px;height:24px" viewBox="0 0 20 25" ><path d="M2.5 23.5 L10 1.8 L17.5 23.5 M0.5 23.5 H5.5 M14.5 23.5 H19.5" fill="none" stroke="#1a1a1a" stroke-width="1.7" stroke-linejoin="round"/><path d="M9 2.5 L10 0.8 L11 2.5 Z" fill="#1a1a1a" stroke="#1a1a1a" stroke-width="1.2"/><path d="M5.6 15.3 H14.4" stroke="#1a1a1a" stroke-width="1.36" opacity="0.75"/></svg>
<div id="t25" class="tx " style="left:363.22px;top:1101.8px;font-size:19.5px;color:#111;transform:scaleX(0.9066);"><b>Extract the transaction number (directly below column name) </b><span class="r" style="color:#3a3a3a">(AI OCR (screen-based))</span></div>
<svg class="ic" style="left:1092px;top:1098.5px;width:19.5px;height:25px" viewBox="0 0 19.5 25" ><path d="M3.2 1.4 H15.6 Q16.9 1.4 16.9 3.1 Q16.9 4.8 15.6 4.8 H14.6 Q13.6 7 14 9.5 Q14.4 11.8 17.4 14.2 Q18.4 15.1 18.4 16.2 Q18.4 17.5 17 17.5 H2 Q0.6 17.5 0.6 16.2 Q0.6 15.1 1.6 14.2 Q4.6 11.8 5 9.5 Q5.4 7 4.4 4.8 H3.3 Q2.1 4.8 2.1 3.1 Q2.1 1.4 3.2 1.4 Z" fill="#111"/><path d="M8.3 17 H10.7 V23 L9.5 25.3 L8.3 23 Z" fill="#111"/></svg>
<div class="a" style="left:318.3px;top:1134.9px;width:613.0999999999999px;height:37.5px;background:#fff;border:2px solid #52a6f6"></div>
<svg class="ic" style="left:338px;top:1142.8px;width:24px;height:23.7px" viewBox="0 0 24 24" ><rect x="1.2" y="1.2" width="21.6" height="21.6" rx="2" fill="none" stroke="#1a1a1a" stroke-width="2"/><path d="M5 19 L6 15 L15.5 5.5 L18.5 8.5 L9 18 Z M14 7 L17 10" fill="none" stroke="#1a1a1a" stroke-width="1.5" stroke-linejoin="round"/></svg>
<div id="t26" class="tx " style="left:366.42px;top:1146.3px;font-size:19.5px;color:#111;transform:scaleX(0.9093);"><b>Store the tracking number in the AP tracking_no </b><span class="r" style="color:#3a3a3a">(Set Variable)</span></div>
<svg class="ic" style="left:901.8px;top:1143px;width:19.5px;height:25px" viewBox="0 0 19.5 25" ><path d="M3.2 1.4 H15.6 Q16.9 1.4 16.9 3.1 Q16.9 4.8 15.6 4.8 H14.6 Q13.6 7 14 9.5 Q14.4 11.8 17.4 14.2 Q18.4 15.1 18.4 16.2 Q18.4 17.5 17 17.5 H2 Q0.6 17.5 0.6 16.2 Q0.6 15.1 1.6 14.2 Q4.6 11.8 5 9.5 Q5.4 7 4.4 4.8 H3.3 Q2.1 4.8 2.1 3.1 Q2.1 1.4 3.2 1.4 Z" fill="#111"/><path d="M8.3 17 H10.7 V23 L9.5 25.3 L8.3 23 Z" fill="#111"/></svg>
<div class="a" style="left:258.4px;top:1199px;width:723.0px;height:151.79999999999995px;border:3px solid #dfe276;background:#fff"></div>
<div class="a" style="left:258.4px;top:1199px;width:729.0px;height:49.40000000000009px;background:#dfe276"></div>
<svg class="ic" style="left:269.95px;top:1212.75px;width:26.5px;height:26.5px" viewBox="0 0 26.5 26.5" ><circle cx="13.25" cy="13.25" r="12.25" fill="url(#gm)" stroke="#3a3a3a" stroke-width="1.6"/><rect x="5.5649999999999995" y="11.85" width="15.37" height="2.8" fill="#111"/></svg>
<svg class="ic" style="left:308px;top:1214.5px;width:24.5px;height:22px" viewBox="0 0 25 23" ><rect x="9.5" y="1" width="6" height="5" fill="none" stroke="#1a1a1a" stroke-width="1.5"/><path d="M12.5 6 V10.5 M3.5 10.5 H21.5 M3.5 10.5 V16 M12.5 10.5 V16 M21.5 10.5 V16" fill="none" stroke="#1a1a1a" stroke-width="1.5"/><rect x="1" y="16.5" width="5" height="5" fill="none" stroke="#1a1a1a" stroke-width="1.5"/><rect x="10" y="16.5" width="5" height="5" fill="none" stroke="#1a1a1a" stroke-width="1.5"/><rect x="19" y="16.5" width="5" height="5" fill="none" stroke="#1a1a1a" stroke-width="1.5"/></svg>
<div id="t27" class="tx " style="left:336.72px;top:1215.9px;font-size:19.5px;color:#111;transform:scaleX(0.8871);"><b>DoElse</b></div>
<div class="a" style="left:318.3px;top:1255.2px;width:645.2px;height:34.09999999999991px;background:#ededed;border:1.5px solid #c6c6c6"></div>
<svg class="ic" style="left:336px;top:1261.5px;width:24px;height:24px" viewBox="0 0 24 24" ><circle cx="12" cy="12" r="10.8" fill="none" stroke="#1a1a1a" stroke-width="1.6"/><path d="M9.5 7.5 L16.5 12 L9.5 16.5 Z" fill="none" stroke="#1a1a1a" stroke-width="1.6" stroke-linejoin="round"/></svg>
<div id="t28" class="tx " style="left:363.22px;top:1264.4px;font-size:19.5px;color:#111;transform:scaleX(0.8968);"><b>Force OK state in case order was not found to proceed </b><span class="r" style="color:#3a3a3a">(Force OK State)</span></div>
<div class="a" style="left:318.3px;top:1299px;width:450.8px;height:34.200000000000045px;background:#ededed;border:1.5px solid #c6c6c6"></div>
<svg class="ic" style="left:336px;top:1305.5px;width:24px;height:23.5px" viewBox="0 0 24 24" ><rect x="1.2" y="1.2" width="21.6" height="21.6" rx="2" fill="none" stroke="#1a1a1a" stroke-width="2"/><path d="M5 19 L6 15 L15.5 5.5 L18.5 8.5 L9 18 Z M14 7 L17 10" fill="none" stroke="#1a1a1a" stroke-width="1.5" stroke-linejoin="round"/></svg>
<div id="t29" class="tx " style="left:363.22px;top:1308.2px;font-size:19.5px;color:#111;transform:scaleX(0.9099);"><b>Set AP orderid_found to false </b><span class="r" style="color:#3a3a3a">(Set Variable)</span></div>
<svg class="ic" style="left:740px;top:1305px;width:19.5px;height:25px" viewBox="0 0 19.5 25" ><path d="M3.2 1.4 H15.6 Q16.9 1.4 16.9 3.1 Q16.9 4.8 15.6 4.8 H14.6 Q13.6 7 14 9.5 Q14.4 11.8 17.4 14.2 Q18.4 15.1 18.4 16.2 Q18.4 17.5 17 17.5 H2 Q0.6 17.5 0.6 16.2 Q0.6 15.1 1.6 14.2 Q4.6 11.8 5 9.5 Q5.4 7 4.4 4.8 H3.3 Q2.1 4.8 2.1 3.1 Q2.1 1.4 3.2 1.4 Z" fill="#111"/><path d="M8.3 17 H10.7 V23 L9.5 25.3 L8.3 23 Z" fill="#111"/></svg>
<div class="a" style="left:204.8px;top:1378.8px;width:412.7px;height:35.100000000000136px;background:#f5f5f5;border:1px solid #dedede"></div>
<svg class="ic" style="left:222.5px;top:1384px;width:24px;height:24px" viewBox="0 0 24 24" ><path d="M2 1.5 H22 Q23 1.5 23 2.5 V16 Q23 17 22 17 H12 L8.5 21 V17 H2 Q1 17 1 16 V2.5 Q1 1.5 2 1.5 Z" fill="none" stroke="#909090" stroke-width="1.6" stroke-linejoin="round"/></svg>
<div id="t30" class="tx " style="left:251.22px;top:1388.0px;font-size:19.5px;color:#8c8c8c;transform:scaleX(0.8986);"><b>Value of AP tracking_no </b><span class="r">(Message Box)</span></div>
<svg class="ic" style="left:588px;top:1384.5px;width:19.5px;height:25px" viewBox="0 0 19.5 25" ><path d="M3.2 1.4 H15.6 Q16.9 1.4 16.9 3.1 Q16.9 4.8 15.6 4.8 H14.6 Q13.6 7 14 9.5 Q14.4 11.8 17.4 14.2 Q18.4 15.1 18.4 16.2 Q18.4 17.5 17 17.5 H2 Q0.6 17.5 0.6 16.2 Q0.6 15.1 1.6 14.2 Q4.6 11.8 5 9.5 Q5.4 7 4.4 4.8 H3.3 Q2.1 4.8 2.1 3.1 Q2.1 1.4 3.2 1.4 Z" fill="#7a7a7a"/><path d="M8.3 17 H10.7 V23 L9.5 25.3 L8.3 23 Z" fill="#7a7a7a"/></svg>
<div class="a" style="left:11px;top:1483px;width:467px;height:211px;border:3px solid #c6e38b;background:#fff"></div>
<div class="a" style="left:11px;top:1483px;width:473px;height:0px;background:#c6e38b"></div>
<svg class="ic" style="left:21.75px;top:1498.25px;width:26.5px;height:26.5px" viewBox="0 0 26.5 26.5" ><circle cx="13.25" cy="13.25" r="12.25" fill="url(#gm)" stroke="#3a3a3a" stroke-width="1.6"/><rect x="5.5649999999999995" y="11.85" width="15.37" height="2.8" fill="#111"/></svg>
<svg class="ic" style="left:60px;top:1499px;width:25px;height:26px" viewBox="0 0 25 26" ><rect x="3" y="1" width="2" height="24" fill="#555"/><rect x="4" y="2" width="20" height="15" fill="#fff" stroke="#222" stroke-width="1"/><rect x="4" y="2" width="5" height="5" fill="#222"/><rect x="4" y="12" width="5" height="5" fill="#222"/><rect x="9" y="7" width="5" height="5" fill="#222"/><rect x="14" y="2" width="5" height="5" fill="#222"/><rect x="14" y="12" width="5" height="5" fill="#222"/><rect x="19" y="7" width="5" height="5" fill="#222"/></svg>
<div id="t31" class="tx " style="left:87.22px;top:1501.2px;font-size:19.5px;color:#111;transform:scaleX(0.9354);"><b>Workflow Finalization</b></div>
<div class="a" style="left:67px;top:1547px;width:299px;height:147px;border:3px solid #c4de84;background:#fff"></div>
<div class="a" style="left:67px;top:1547px;width:305px;height:49px;background:#c4de84"></div>
<svg class="ic" style="left:77.75px;top:1560.25px;width:26.5px;height:26.5px" viewBox="0 0 26.5 26.5" ><circle cx="13.25" cy="13.25" r="12.25" fill="url(#gm)" stroke="#3a3a3a" stroke-width="1.6"/><rect x="5.5649999999999995" y="11.85" width="15.37" height="2.8" fill="#111"/></svg>
<svg class="ic" style="left:116.5px;top:1561.5px;width:24px;height:24px" viewBox="0 0 24 24" ><circle cx="12" cy="12" r="10.8" fill="none" stroke="#1a1a1a" stroke-width="1.6"/><path d="M7 12.5 L10.5 16 L17 8.5" fill="none" stroke="#1a1a1a" stroke-width="1.6"/></svg>
<div id="t32" class="tx " style="left:145.22px;top:1563.7px;font-size:19.5px;color:#111;transform:scaleX(0.9119);"><b>Workflow run succeeded</b></div>
<div class="a" style="left:123px;top:1605px;width:222px;height:40px;border:2px dashed #d2d2d2"></div>
<div id="t33" class="tx " style="left:164.24px;top:1611.8px;font-size:19px;color:#c4c4c4;transform:scaleX(0.9344);"><span class="r">Drop Items here...</span></div>
</div>
<div class="a" style="left:6px;top:1628px;width:2977px;height:35px;background:#f8f8f8"></div>
<div class="a" style="left:6px;top:1663px;width:2977px;height:57px;background:#f0f0f0"></div>
<div class="a" style="left:0px;top:1720px;width:2996px;height:8px;background:#323f50"></div>
<svg class="ic" style="left:2954px;top:123px;width:22px;height:14px" viewBox="0 0 22 14" ><path d="M2 12 L11 3 L20 12" fill="none" stroke="#555" stroke-width="1.8"/></svg>
<div class="a" style="left:2959.7px;top:334px;width:9.7px;height:1030.7px;background:#d0d0d5;border-radius:5px"></div>
<svg class="ic" style="left:2954px;top:1604px;width:22px;height:14px" viewBox="0 0 22 14" ><path d="M2 2 L11 11 L20 2" fill="none" stroke="#555" stroke-width="1.8"/></svg>
<svg class="ic" style="left:18px;top:1637px;width:13px;height:20px" viewBox="0 0 13 20" ><path d="M11 1.5 L2.5 10 L11 18.5" fill="none" stroke="#666" stroke-width="1.8"/></svg>
<svg class="ic" style="left:2924px;top:1637px;width:13px;height:20px" viewBox="0 0 13 20" ><path d="M2 1.5 L10.5 10 L2 18.5" fill="none" stroke="#555" stroke-width="1.8"/></svg>
<div class="a" style="left:11px;top:1669px;width:41px;height:41px;border:1.5px solid #c4c4c4;background:#f0f0f0"></div>
<svg class="ic" style="left:14px;top:1673px;width:36px;height:34px" viewBox="0 0 36 34" ><path d="M8 3 H13 V12 H14 V30 H3 V20 Z M22 3 H27 L32 20 V30 H21 V12 H22 Z" fill="none" stroke="#111" stroke-width="2.4" stroke-linejoin="round"/><path d="M13 12 H21 M14 18 H21" stroke="#111" stroke-width="2.4"/></svg>
<div class="a" style="left:57px;top:1669px;width:397px;height:41px;border:1.5px solid #bdbdbd;background:#fff"></div>
<div id="t34" class="tx " style="left:66.98px;top:1679.2px;font-size:25.5px;color:#4a4ab8;transform:scaleX(0.8407);"><span class="i">Search...</span></div>
<div class="a" style="left:459px;top:1669px;width:41px;height:41px;border:1.5px solid #c4c4c4;background:#efefef"></div>
<svg class="ic" style="left:462px;top:1678px;width:36px;height:22px" viewBox="0 0 36 22" ><path d="M3 19 L18 4 L33 19" fill="none" stroke="#111" stroke-width="3.6"/></svg>
<div class="a" style="left:507px;top:1669px;width:41px;height:41px;border:1.5px solid #c4c4c4;background:#efefef"></div>
<svg class="ic" style="left:510px;top:1680px;width:36px;height:22px" viewBox="0 0 36 22" ><path d="M3 3 L18 18 L33 3" fill="none" stroke="#111" stroke-width="3.6"/></svg>
<div id="t35" class="tx nr" style="left:2634.0px;top:1679.8px;font-size:25px;color:#111;transform:scaleX(0.9541);"><span class="r">75%</span></div>
<svg class="ic" style="left:2686px;top:1675px;width:33px;height:33px" viewBox="0 0 33 33" ><circle cx="13" cy="13" r="11.5" fill="none" stroke="#8c9db3" stroke-width="1.6"/><path d="M21 21 L31 31" stroke="#8c9db3" stroke-width="1.8"/></svg>
<div class="a" style="left:2742px;top:1687px;width:219px;height:7px;border:1.2px solid #c4c6ca;background:#e3e4e6;border-radius:4px"></div>
<div class="a" style="left:2755px;top:1669px;width:21px;height:42px;border:1.5px solid #b8b9bd;background:#e6e7ea;border-radius:3px"></div>
<div class="a" style="left:1442.3px;top:704px;width:1066.8999999999999px;height:392px;border:2px solid #7a7a7a;background:#f0f0f0"></div>
<div class="a" style="left:1444.3px;top:706px;width:1066.8999999999999px;height:59px;background:#ffffff"></div>
<svg class="ic" style="left:1462px;top:718.7px;width:28px;height:29px" viewBox="0 0 28 29" ><circle cx="3.8" cy="14.6" r="2.7" fill="#3b97d9"/><circle cx="14.5" cy="14.6" r="2.7" fill="#3b97d9"/><circle cx="24.2" cy="14.6" r="2.7" fill="#3b97d9"/><path d="M4.2 10 L7.3 5.2 Q7.9 4.3 9 4.3 H12" fill="none" stroke="#3b9ad8" stroke-width="2.8" stroke-linecap="round"/><path d="M11.5 0.8 L16.2 4.3 L11.5 7.8 Z" fill="#1f6796" stroke="#1f6796" stroke-width="1" stroke-linejoin="round"/><path d="M23.8 19.2 L20.7 24 Q20.1 24.9 19 24.9 H16" fill="none" stroke="#3b9ad8" stroke-width="2.8" stroke-linecap="round"/><path d="M16.5 21.4 L11.8 24.9 L16.5 28.4 Z" fill="#1f6796" stroke="#1f6796" stroke-width="1" stroke-linejoin="round"/></svg>
<div id="t36" class="tx " style="left:1502.38px;top:721.3px;font-size:25.5px;color:#111;transform:scaleX(0.8912);"><span class="r" style="color:#3a3a3a">Set Variable wizard</span></div>
<svg class="ic" style="left:2471.6px;top:723.5px;width:20.5px;height:20px" viewBox="0 0 20.5 20" ><path d="M1 1 L19.5 19 M19.5 1 L1 19" stroke="#111" stroke-width="1.8"/></svg>
<div id="t37" class="tx " style="left:1457.98px;top:783.8px;font-size:25.5px;color:#222;transform:scaleX(0.9379);"><span class="r">Name</span></div>
<div class="a" style="left:1578px;top:774px;width:924px;height:39px;border:1.5px solid #bebebe;background:#fff"></div>
<div id="t38" class="tx " style="left:1586.68px;top:783.8px;font-size:25.5px;color:#222;transform:scaleX(0.9428);"><span class="r">Store the tracking number in the AP tracking_no</span></div>
<div id="t39" class="tx " style="left:1457.98px;top:836.0px;font-size:25.5px;color:#222;transform:scaleX(0.8867);"><span class="r">This Step:</span></div>
<div id="t40" class="tx " style="left:1578.38px;top:836.0px;font-size:25.5px;color:#1212e6;transform:scaleX(0.9398);"><span class="r">Activity Workflow/Transaction/Check if the order was found/Case:/Store the tra...</span></div>
<div class="a" style="left:2442.4px;top:822px;width:59.5px;height:47px;border:1.5px solid #c8c8c8;background:#e4e4e4;border-radius:7px"></div>
<svg class="ic" style="left:2457px;top:832px;width:32px;height:32px" viewBox="0 0 24 24" ><circle cx="12" cy="12" r="10.8" fill="none" stroke="#111" stroke-width="1.6"/><path d="M9 9.3 C9 6.8 10.5 5.8 12.1 5.8 C13.8 5.8 15.2 7 15.2 8.7 C15.2 11 12.3 11.2 12.3 13.8 V14.5" fill="none" stroke="#111" stroke-width="1.7"/><rect x="11.2" y="16.3" width="2.2" height="2.2" fill="#111"/></svg>
<div class="a" style="left:1450.4px;top:884px;width:1052px;height:146px;border:1.5px solid #c4c4c4;border-radius:11px"></div>
<div id="t41" class="tx " style="left:1471.48px;top:910.7px;font-size:25.5px;color:#222;transform:scaleX(0.9305);"><span class="r">Variable</span></div>
<div class="a" style="left:1596px;top:899.3px;width:894px;height:40px;border:1.5px solid #c2c2c2;background:#e6e6e6;border-radius:7px"></div>
<svg class="ic" style="left:1614px;top:906px;width:33px;height:30px" viewBox="0 0 33 30" ><circle cx="5" cy="6" r="3.5" fill="none" stroke="#1a1a1a" stroke-width="1.6"/><circle cx="27" cy="6" r="3.5" fill="none" stroke="#1a1a1a" stroke-width="1.6"/><circle cx="15" cy="24" r="3.5" fill="none" stroke="#1a1a1a" stroke-width="1.6"/><path d="M8.5 6 H23.5 M6.8 9 L13 21" fill="none" stroke="#1a1a1a" stroke-width="1.6"/></svg>
<div id="t42" class="tx " style="left:1655.68px;top:910.7px;font-size:25.5px;color:#111;transform:scaleX(0.9008);"><b>Activity Parameters.tracking_no</b></div>
<svg class="ic" style="left:2459px;top:918px;width:18px;height:12px" viewBox="0 0 18 12" ><path d="M1 1 H17 L9 11 Z" fill="#111"/></svg>
<div id="t43" class="tx " style="left:1471.48px;top:983.3px;font-size:25.5px;color:#222;transform:scaleX(1.0267);"><span class="r">Value:</span></div>
<div class="a" style="left:1596px;top:973.8px;width:853px;height:50px;border:1.5px solid #c2c2c2;background:#e6e6e6;border-radius:7px"></div>
<svg class="ic" style="left:1616px;top:979px;width:27.5px;height:31px" viewBox="0 0 20 25" ><path d="M2.5 23.5 L10 1.8 L17.5 23.5 M0.5 23.5 H5.5 M14.5 23.5 H19.5" fill="none" stroke="#1a1a1a" stroke-width="2" stroke-linejoin="round"/><path d="M9 2.5 L10 0.8 L11 2.5 Z" fill="#1a1a1a" stroke="#1a1a1a" stroke-width="1.2"/><path d="M5.6 15.3 H14.4" stroke="#1a1a1a" stroke-width="1.6" opacity="0.75"/></svg>
<div id="t44" class="tx " style="left:1655.68px;top:983.3px;font-size:25.5px;color:#111;transform:scaleX(0.9296);"><b>Extract the transaction number (directly below column name).Recogn</b></div>
<svg class="ic" style="left:2461.4px;top:979px;width:25px;height:31px" viewBox="0 0 19.5 25" ><path d="M3.2 1.4 H15.6 Q16.9 1.4 16.9 3.1 Q16.9 4.8 15.6 4.8 H14.6 Q13.6 7 14 9.5 Q14.4 11.8 17.4 14.2 Q18.4 15.1 18.4 16.2 Q18.4 17.5 17 17.5 H2 Q0.6 17.5 0.6 16.2 Q0.6 15.1 1.6 14.2 Q4.6 11.8 5 9.5 Q5.4 7 4.4 4.8 H3.3 Q2.1 4.8 2.1 3.1 Q2.1 1.4 3.2 1.4 Z" fill="#111"/><path d="M8.3 17 H10.7 V23 L9.5 25.3 L8.3 23 Z" fill="#111"/></svg>
<div id="t45" class="tx " style="left:1449.98px;top:1057.8px;font-size:25.5px;color:#222;transform:scaleX(0.9478);"><span class="r">Error handling</span></div>
<div class="a" style="left:1596.3px;top:1017.7px;width:1125px;height:419px;border:2px solid #111;background:#fff"></div>
<div class="a" style="left:1608px;top:1029.5px;width:1069.5px;height:400px;border-left:1.5px solid #c8c8c8;border-top:1.5px solid #c8c8c8;border-right:1.5px solid #c8c8c8"></div>
<div class="a" style="left:2680px;top:1030px;width:33.5px;height:398px;background:#f9f9f9"></div>
<svg class="ic" style="left:2687px;top:1039px;width:21px;height:13px" viewBox="0 0 21 13" ><path d="M1.5 11.5 L10.5 2 L19.5 11.5" fill="none" stroke="#555" stroke-width="1.6"/></svg>
<div class="a" style="left:2692px;top:1063.4px;width:9.5px;height:269px;background:#cdcdd2;border-radius:5px"></div>
<svg class="ic" style="left:2687px;top:1405px;width:21px;height:13px" viewBox="0 0 21 13" ><path d="M1.5 1.5 L10.5 11 L19.5 1.5" fill="none" stroke="#555" stroke-width="1.6"/></svg>
<div class="a" style="left:1688px;top:1384.8px;width:987.3px;height:43px;background:#b8d5ee"></div>
<div id="t46" class="tx " style="left:1700.78px;top:1042.8px;font-size:25.5px;color:#2e2e2e;transform:scaleX(0.9842);"><b>&lt; None &gt;</b></div>
<svg class="ic" style="left:1627.5px;top:1093.5px;width:9px;height:14px" viewBox="0 0 9 14" ><path d="M0.5 0.5 L8.5 7 L0.5 13.5 Z" fill="#4a4a4a"/></svg>
<svg class="ic" style="left:1657px;top:1085px;width:33px;height:30px" viewBox="0 0 33 30" ><circle cx="5" cy="6" r="3.5" fill="none" stroke="#1a1a1a" stroke-width="1.6"/><circle cx="27" cy="6" r="3.5" fill="none" stroke="#1a1a1a" stroke-width="1.6"/><circle cx="15" cy="24" r="3.5" fill="none" stroke="#1a1a1a" stroke-width="1.6"/><path d="M8.5 6 H23.5 M6.8 9 L13 21" fill="none" stroke="#1a1a1a" stroke-width="1.6"/></svg>
<div id="t47" class="tx " style="left:1699.48px;top:1086.8px;font-size:25.5px;color:#2e2e2e;transform:scaleX(0.9356);"><b>Activity Parameters</b></div>
<svg class="ic" style="left:1627.5px;top:1137.5px;width:9px;height:14px" viewBox="0 0 9 14" ><path d="M0.5 0.5 L8.5 7 L0.5 13.5 Z" fill="#4a4a4a"/></svg>
<svg class="ic" style="left:1657px;top:1127px;width:33px;height:33px" viewBox="0 0 33 33" ><polygon points="16.50,1.50 19.43,1.79 20.90,5.88 22.89,6.94 27.11,5.89 28.97,8.17 27.12,12.10 27.78,14.26 31.50,16.50 31.21,19.43 27.12,20.90 26.06,22.89 27.11,27.11 24.83,28.97 20.90,27.12 18.74,27.78 16.50,31.50 13.57,31.21 12.10,27.12 10.11,26.06 5.89,27.11 4.03,24.83 5.88,20.90 5.22,18.74 1.50,16.50 1.79,13.57 5.88,12.10 6.94,10.11 5.89,5.89 8.17,4.03 12.10,5.88 14.26,5.22" fill="none" stroke="#1a1a1a" stroke-width="1.6" stroke-linejoin="round"/><circle cx="16.5" cy="16.5" r="5" fill="none" stroke="#1a1a1a" stroke-width="1.6"/></svg>
<div id="t48" class="tx " style="left:1699.48px;top:1130.8px;font-size:25.5px;color:#2e2e2e;transform:scaleX(0.9275);"><b>Settings</b></div>
<svg class="ic" style="left:1627.5px;top:1181.5px;width:9px;height:14px" viewBox="0 0 9 14" ><path d="M0.5 0.5 L8.5 7 L0.5 13.5 Z" fill="#4a4a4a"/></svg>
<svg class="ic" style="left:1659px;top:1172px;width:30px;height:31px" viewBox="0 0 22 25" ><path d="M2 2 L20.5 12.5 L2 23 Z" fill="none" stroke="#1a1a1a" stroke-width="2" stroke-linejoin="round"/></svg>
<div id="t49" class="tx " style="left:1699.48px;top:1174.8px;font-size:25.5px;color:#2e2e2e;transform:scaleX(0.9399);"><b>Run AS/400 mock-up  (Run Program chrome.exe)</b></div>
<svg class="ic" style="left:1627.5px;top:1225.0px;width:9px;height:14px" viewBox="0 0 9 14" ><path d="M0.5 0.5 L8.5 7 L0.5 13.5 Z" fill="#4a4a4a"/></svg>
<svg class="ic" style="left:1657px;top:1214.5px;width:33px;height:33px" viewBox="0 0 24 24" ><path d="M12 12.6 Q12.6 12.6 13.4 13 L21.6 16.6 Q22.8 17.3 21.6 18.1 L13.4 21.8 Q12 22.5 10.6 21.8 L2.4 18.1 Q1.2 17.3 2.4 16.6 L10.6 13 Q11.4 12.6 12 12.6 Z" fill="#fff" stroke="#1a1a1a" stroke-width="2" stroke-linejoin="round"/><path d="M12 7.1 Q12.6 7.1 13.4 7.5 L21.6 11.1 Q22.8 11.8 21.6 12.6 L13.4 16.3 Q12 17.0 10.6 16.3 L2.4 12.6 Q1.2 11.8 2.4 11.1 L10.6 7.5 Q11.4 7.1 12 7.1 Z" fill="#fff" stroke="#1a1a1a" stroke-width="2" stroke-linejoin="round"/><path d="M12 1.6 Q12.6 1.6 13.4 2 L21.6 5.6 Q22.8 6.3 21.6 7.1 L13.4 10.8 Q12 11.5 10.6 10.8 L2.4 7.1 Q1.2 6.3 2.4 5.6 L10.6 2 Q11.4 1.6 12 1.6 Z" fill="#fff" stroke="#1a1a1a" stroke-width="2" stroke-linejoin="round"/></svg>
<div id="t50" class="tx " style="left:1699.48px;top:1218.3px;font-size:25.5px;color:#2e2e2e;transform:scaleX(0.9249);"><b>Search for "Order-ID: " on the screen (Search Pattern)</b></div>
<svg class="ic" style="left:1627.5px;top:1269.0px;width:9px;height:14px" viewBox="0 0 9 14" ><path d="M0.5 0.5 L8.5 7 L0.5 13.5 Z" fill="#4a4a4a"/></svg>
<svg class="ic" style="left:1657px;top:1258.5px;width:33px;height:33px" viewBox="0 0 24 24" ><path d="M12 12.6 Q12.6 12.6 13.4 13 L21.6 16.6 Q22.8 17.3 21.6 18.1 L13.4 21.8 Q12 22.5 10.6 21.8 L2.4 18.1 Q1.2 17.3 2.4 16.6 L10.6 13 Q11.4 12.6 12 12.6 Z" fill="#fff" stroke="#1a1a1a" stroke-width="2" stroke-linejoin="round"/><path d="M12 7.1 Q12.6 7.1 13.4 7.5 L21.6 11.1 Q22.8 11.8 21.6 12.6 L13.4 16.3 Q12 17.0 10.6 16.3 L2.4 12.6 Q1.2 11.8 2.4 11.1 L10.6 7.5 Q11.4 7.1 12 7.1 Z" fill="#fff" stroke="#1a1a1a" stroke-width="2" stroke-linejoin="round"/><path d="M12 1.6 Q12.6 1.6 13.4 2 L21.6 5.6 Q22.8 6.3 21.6 7.1 L13.4 10.8 Q12 11.5 10.6 10.8 L2.4 7.1 Q1.2 6.3 2.4 5.6 L10.6 2 Q11.4 1.6 12 1.6 Z" fill="#fff" stroke="#1a1a1a" stroke-width="2" stroke-linejoin="round"/></svg>
<div id="t51" class="tx " style="left:1699.48px;top:1262.3px;font-size:25.5px;color:#2e2e2e;transform:scaleX(0.9240);"><b>Search the word "Tracking No." on the screen (Search Pattern)</b></div>
<svg class="ic" style="left:1627.5px;top:1313.0px;width:9px;height:14px" viewBox="0 0 9 14" ><path d="M0.5 0.5 L8.5 7 L0.5 13.5 Z" fill="#4a4a4a"/></svg>
<svg class="ic" style="left:1657px;top:1302.5px;width:33px;height:33px" viewBox="0 0 24 24" ><path d="M12 12.6 Q12.6 12.6 13.4 13 L21.6 16.6 Q22.8 17.3 21.6 18.1 L13.4 21.8 Q12 22.5 10.6 21.8 L2.4 18.1 Q1.2 17.3 2.4 16.6 L10.6 13 Q11.4 12.6 12 12.6 Z" fill="#fff" stroke="#1a1a1a" stroke-width="2" stroke-linejoin="round"/><path d="M12 7.1 Q12.6 7.1 13.4 7.5 L21.6 11.1 Q22.8 11.8 21.6 12.6 L13.4 16.3 Q12 17.0 10.6 16.3 L2.4 12.6 Q1.2 11.8 2.4 11.1 L10.6 7.5 Q11.4 7.1 12 7.1 Z" fill="#fff" stroke="#1a1a1a" stroke-width="2" stroke-linejoin="round"/><path d="M12 1.6 Q12.6 1.6 13.4 2 L21.6 5.6 Q22.8 6.3 21.6 7.1 L13.4 10.8 Q12 11.5 10.6 10.8 L2.4 7.1 Q1.2 6.3 2.4 5.6 L10.6 2 Q11.4 1.6 12 1.6 Z" fill="#fff" stroke="#1a1a1a" stroke-width="2" stroke-linejoin="round"/></svg>
<div id="t52" class="tx " style="left:1699.48px;top:1306.3px;font-size:25.5px;color:#2e2e2e;transform:scaleX(0.9363);"><b>Search arrow up "page" on screen (== order not found) (Search Pattern)</b></div>
<svg class="ic" style="left:1627.5px;top:1358px;width:10px;height:10px" viewBox="0 0 10 10" ><path d="M9.5 0.5 V9.5 H0.5 Z" fill="#4a4a4a"/></svg>
<svg class="ic" style="left:1659px;top:1346px;width:30px;height:32px" viewBox="0 0 20 25" ><path d="M2.5 23.5 L10 1.8 L17.5 23.5 M0.5 23.5 H5.5 M14.5 23.5 H19.5" fill="none" stroke="#1a1a1a" stroke-width="2" stroke-linejoin="round"/><path d="M9 2.5 L10 0.8 L11 2.5 Z" fill="#1a1a1a" stroke="#1a1a1a" stroke-width="1.2"/><path d="M5.6 15.3 H14.4" stroke="#1a1a1a" stroke-width="1.6" opacity="0.75"/></svg>
<div id="t53" class="tx " style="left:1699.48px;top:1350.8px;font-size:25.5px;color:#2e2e2e;transform:scaleX(0.9291);"><b>Extract the transaction number (directly below column name) (AI OCR (screen-based))</b></div>
<svg class="ic" style="left:1700px;top:1391px;width:24px;height:31px" viewBox="0 0 24 31" ><path d="M1.5 1.5 H15 L22.5 9 V29.5 H1.5 Z M15 1.5 V9 H22.5" fill="none" stroke="#9a9aa8" stroke-width="1.4"/><text x="3" y="23.5" font-family="Liberation Sans" font-size="8.5" font-weight="700" fill="#333">abc</text><rect x="3" y="20" width="3" height="3.5" fill="#222"/></svg>
<div id="t54" class="tx " style="left:1737.98px;top:1394.6px;font-size:25.5px;color:#2e2e2e;transform:scaleX(0.9206);"><b>Recognized Text</b></div>
<svg class="ic" style="left:0;top:0;width:2996px;height:1728px" viewBox="0 0 2996 1728">
<rect x="304.1" y="1125.2" width="645" height="61.3" fill="none" stroke="#1b30f6" stroke-width="9.6"/>
<rect x="1430.8" y="694" width="1307.2" height="757.3" fill="none" stroke="#1b30f6" stroke-width="10"/>
<path d="M949 1125.2 L1431 694" stroke="#1b30f6" stroke-width="10" fill="none"/>
<path d="M949 1186.5 L1431 1451.3" stroke="#1b30f6" stroke-width="10" fill="none"/>
</svg>
</body></html>
